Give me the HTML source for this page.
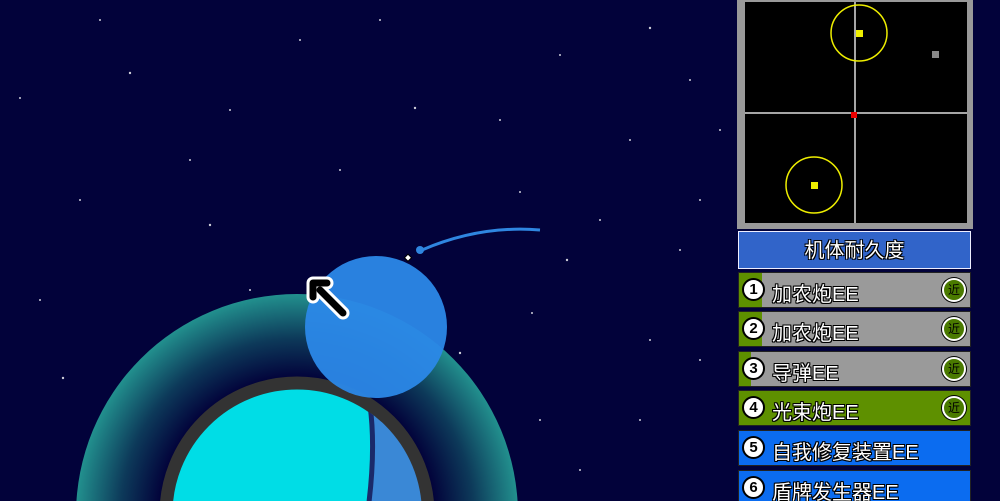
<!DOCTYPE html>
<html style="overflow:hidden;height:501px"><head><meta charset="utf-8"><style>
body{margin:0;width:1000px;height:501px;overflow:hidden;background:#02023a;position:relative;font-family:"Liberation Sans","Noto Sans CJK SC",sans-serif}
.row{position:absolute;left:738px;width:233px;height:36px;background:#9a9a9a;border:1px solid #222;box-sizing:border-box;overflow:hidden}
.fill{position:absolute;left:0;top:0;bottom:0;background:#5e9000}
.num{position:absolute;left:3px;top:5px;width:23px;height:23px;border-radius:50%;background:#fff;border:2px solid #000;box-sizing:border-box;font:bold 15px "Liberation Sans",sans-serif;text-align:center;line-height:20px;color:#000}
.t{position:absolute;left:33px;top:9px;font-size:20px;color:#fff;text-shadow:0 0 1px #000,1px 1px 0 #000,-1px -1px 0 #000,1px -1px 0 #000,-1px 1px 0 #000,0 1px 0 #000,0 -1px 0 #000,1px 0 0 #000,-1px 0 0 #000;white-space:nowrap;line-height:26px}
.b{position:absolute;right:4px;top:5px;width:24px;height:24px;border-radius:50%;background:#4a7a00;border:2px solid #fff;box-shadow:0 0 0 1px #000;box-sizing:border-box;font-size:12px;text-align:center;line-height:20px;color:#000}
</style></head><body>
<svg width="1000" height="501" style="position:absolute;left:0;top:0">
<defs>
<radialGradient id="halo" cx="297" cy="515" r="221" gradientUnits="userSpaceOnUse">
<stop offset="0.62" stop-color="#02023a"/><stop offset="0.8" stop-color="#0d3a5a"/><stop offset="1" stop-color="#22908e"/></radialGradient>
</defs>
<g fill="#fff" opacity="0.8">
<circle cx="130" cy="73" r="1.2"/><circle cx="210" cy="225" r="1.2"/><circle cx="415" cy="108" r="1.2"/><circle cx="475" cy="233" r="1"/><circle cx="20" cy="98" r="1"/><circle cx="560" cy="55" r="1"/><circle cx="650" cy="28" r="1.2"/><circle cx="690" cy="80" r="1"/><circle cx="630" cy="140" r="1"/><circle cx="520" cy="192" r="1"/><circle cx="460" cy="353" r="1.2"/><circle cx="532" cy="313" r="1"/><circle cx="567" cy="260" r="1.2"/><circle cx="650" cy="340" r="1"/><circle cx="700" cy="360" r="1"/><circle cx="540" cy="420" r="1"/><circle cx="63" cy="378" r="1.2"/><circle cx="160" cy="405" r="1"/><circle cx="340" cy="170" r="1"/><circle cx="300" cy="40" r="1"/><circle cx="190" cy="160" r="1"/><circle cx="80" cy="200" r="1"/><circle cx="40" cy="300" r="1"/><circle cx="250" cy="290" r="1"/><circle cx="600" cy="220" r="1"/><circle cx="680" cy="250" r="1"/><circle cx="720" cy="130" r="1"/><circle cx="380" cy="20" r="1"/><circle cx="100" cy="20" r="1"/><circle cx="230" cy="110" r="1"/><circle cx="580" cy="470" r="1"/><circle cx="640" cy="420" r="1"/><circle cx="700" cy="200" r="1"/><circle cx="500" cy="120" r="1"/></g>
<circle cx="297" cy="515" r="221" fill="url(#halo)"/>
<circle cx="297" cy="514" r="131" fill="#00dde6" stroke="#333" stroke-width="13"/>
<clipPath id="cp"><circle cx="297" cy="514" r="125"/></clipPath>
<path d="M370 405 Q376 450 368 510 L440 510 L440 405Z" fill="#3a88d6" clip-path="url(#cp)"/>
<path d="M370 405 Q376 450 368 510" fill="none" stroke="#1a2a6a" stroke-width="5" clip-path="url(#cp)"/>
<path d="M422 250 Q480 225 540 230" fill="none" stroke="#2f86e0" stroke-width="3"/>
<circle cx="420" cy="250" r="4" fill="#2f86e0"/>
<rect x="406" y="255" width="5" height="5" fill="#fff" stroke="#000" transform="rotate(45 408 257)"/>
<circle cx="376" cy="327" r="71" fill="#2b88e8" opacity="0.95"/>
<path d="M343 313 L320 290" stroke="#fff" stroke-width="13" stroke-linecap="round"/>
<path d="M313 297 L313 283 L327 283" fill="none" stroke="#fff" stroke-width="13" stroke-linejoin="round" stroke-linecap="round"/>
<path d="M343 313 L320 290" stroke="#000" stroke-width="7" stroke-linecap="round"/>
<path d="M313 297 L313 283 L327 283" fill="none" stroke="#000" stroke-width="7" stroke-linejoin="round" stroke-linecap="round"/>
<rect x="737" y="0" width="236" height="229" fill="#999"/>
<rect x="745" y="2" width="222" height="221" fill="#000"/>
<line x1="745" y1="113" x2="967" y2="113" stroke="#ddd" stroke-width="1.5"/>
<line x1="855" y1="2" x2="855" y2="223" stroke="#ddd" stroke-width="1.5"/>
<circle cx="859" cy="33" r="28" fill="none" stroke="#ee0" stroke-width="1.5"/>
<rect x="856" y="30" width="7" height="7" fill="#ee0"/>
<circle cx="814" cy="185" r="28" fill="none" stroke="#ee0" stroke-width="1.5"/>
<rect x="811" y="182" width="7" height="7" fill="#ee0"/>
<rect x="932" y="51" width="7" height="7" fill="#888"/>
<rect x="851" y="112" width="6" height="6" fill="#e00"/>
</svg>
<div style="position:absolute;left:738px;top:231px;width:233px;height:38px;background:#3164c9;border:1px solid #eef;box-sizing:border-box;text-align:center;font-size:20px;line-height:38px;color:#fff;text-shadow:1px 1px 0 #000,-1px -1px 0 #000,1px -1px 0 #000,-1px 1px 0 #000">机体耐久度</div>
<div class="row" style="top:272px"><div class="fill" style="width:23px"></div><div class="num">1</div><div class="t">加农炮EE</div><div class="b">近</div></div>
<div class="row" style="top:311px"><div class="fill" style="width:23px"></div><div class="num">2</div><div class="t">加农炮EE</div><div class="b">近</div></div>
<div class="row" style="top:351px"><div class="fill" style="width:12px"></div><div class="num">3</div><div class="t">导弹EE</div><div class="b">近</div></div>
<div class="row" style="top:390px;background:#5e9000"><div class="num">4</div><div class="t">光束炮EE</div><div class="b">近</div></div>
<div class="row" style="top:430px;background:#0b6cf0"><div class="num">5</div><div class="t">自我修复装置EE</div></div>
<div class="row" style="top:470px;background:#0b6cf0;height:31px;border-bottom:none"><div class="num">6</div><div class="t">盾牌发生器EE</div></div>
</body></html>
